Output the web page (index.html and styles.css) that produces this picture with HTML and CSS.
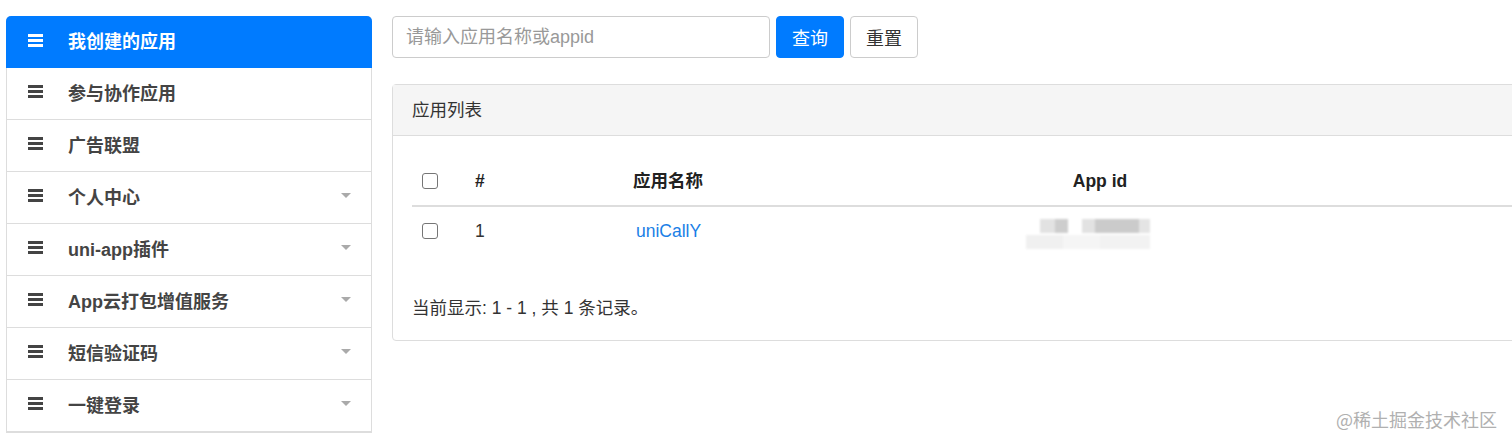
FILE: index.html
```html
<!DOCTYPE html>
<html lang="zh-CN">
<head>
  <meta charset="UTF-8">
  <title>我创建的应用</title>
  <link rel="stylesheet" href="styles.css">
</head>
<body>

<div class="page">
  <!-- Side menu -->
  <ul class="side-menu">
    <li class="menu-item active"><span class="bars"><i></i><i></i><i></i></span><span class="label">我创建的应用</span></li>
    <li class="menu-item"><span class="bars"><i></i><i></i><i></i></span><span class="label">参与协作应用</span></li>
    <li class="menu-item"><span class="bars"><i></i><i></i><i></i></span><span class="label">广告联盟</span></li>
    <li class="menu-item"><span class="bars"><i></i><i></i><i></i></span><span class="label">个人中心</span><span class="caret"></span></li>
    <li class="menu-item"><span class="bars"><i></i><i></i><i></i></span><span class="label">uni-app插件</span><span class="caret"></span></li>
    <li class="menu-item"><span class="bars"><i></i><i></i><i></i></span><span class="label">App云打包增值服务</span><span class="caret"></span></li>
    <li class="menu-item"><span class="bars"><i></i><i></i><i></i></span><span class="label">短信验证码</span><span class="caret"></span></li>
    <li class="menu-item"><span class="bars"><i></i><i></i><i></i></span><span class="label">一键登录</span><span class="caret"></span></li>
  </ul>

  <div class="main">
    <!-- Search -->
    <form class="search-bar">
      <input type="text" class="search-input" placeholder="请输入应用名称或appid">
      <button type="button" class="btn btn-primary">查询</button>
      <button type="reset" class="btn btn-default">重置</button>
    </form>

    <!-- App list -->
    <div class="card">
      <div class="card-header">应用列表</div>
      <div class="card-body">
        <table class="app-table">
          <thead>
            <tr>
              <th class="col-check"><span class="checkbox"></span></th>
              <th class="col-num">#</th>
              <th class="col-name">应用名称</th>
              <th class="col-id">App id</th>
              <th></th>
            </tr>
          </thead>
          <tbody>
            <tr>
              <td class="col-check"><span class="checkbox"></span></td>
              <td class="col-num">1</td>
              <td class="col-name"><a href="#" class="app-link">uniCallY</a></td>
              <td class="col-id">
                <div class="blurred">
                  <span class="blur-line top"></span>
                  <span class="blur-line bottom"></span>
                </div>
              </td>
              <td></td>
            </tr>
          </tbody>
        </table>
        <p class="summary">当前显示: 1 - 1 , 共 1 条记录。</p>
      </div>
    </div>
  </div>
</div>

<div class="watermark">@稀土掘金技术社区</div>

</body>
</html>
```

FILE: styles.css
```css
/* General Styling */
html, body {
  margin: 0;
  height: 100%;
  overflow: hidden;
}

body {
  font-family: "Liberation Sans", "Noto Sans CJK SC", sans-serif;
  font-size: 17.5px;
  color: #333;
  background: #fff;
}

.page {
  display: flex;
  align-items: flex-start;
  gap: 20px;
  padding: 16px 0 0 6px;
}

/* Side menu */
.side-menu {
  list-style: none;
  margin: 0;
  padding: 0;
  width: 364px;
  flex: none;
  border: 1px solid #ddd;
  border-top: none;
  border-radius: 5px 5px 0 0;
}

.menu-item {
  display: flex;
  align-items: center;
  box-sizing: border-box;
  height: 52px;
  padding: 0 18px 4px 21px;
  border-bottom: 1px solid #ddd;
  color: #444;
  font-weight: bold;
  font-size: 18px;
}

.menu-item.active {
  background: #007bff;
  color: #fff;
  margin: 0 -1px;
  padding-left: 22px;
  padding-right: 19px;
  border-bottom: none;
  border-radius: 5px 5px 0 0;
}

.bars {
  display: flex;
  flex-direction: column;
  justify-content: space-between;
  width: 15px;
  height: 13px;
  margin-right: 25px;
}

.bars i {
  display: block;
  height: 3px;
  background: currentColor;
}

.label {
  flex: 1;
}

.caret {
  width: 0;
  height: 0;
  border-left: 5px solid transparent;
  border-right: 5px solid transparent;
  border-top: 5px solid #aaa;
  margin-right: 2px;
}

/* Main area */
.main {
  width: 1140px;
  flex: none;
}

.search-bar {
  display: flex;
  gap: 6px;
  margin: 0 0 26px;
}

.search-input {
  width: 378px;
  height: 42px;
  box-sizing: border-box;
  padding: 6px 13px;
  border: 1px solid #ccc;
  border-radius: 4px;
  font-family: inherit;
  font-size: 18px;
  color: #333;
}

.search-input::placeholder {
  color: #999;
}

.btn {
  height: 42px;
  padding: 0 15px;
  border-radius: 4px;
  font-family: inherit;
  font-size: 18px;
  cursor: pointer;
}

.btn-primary {
  background: #007bff;
  border: 1px solid #007bff;
  color: #fff;
}

.btn-default {
  background: #fff;
  border: 1px solid #ccc;
  color: #333;
}

/* Card */
.card {
  border: 1px solid #ddd;
  border-radius: 4px;
}

.card-header {
  height: 50px;
  line-height: 50px;
  padding: 0 19px;
  background: #f5f5f5;
  border-bottom: 1px solid #ddd;
  color: #333;
}

.card-body {
  padding: 21px 19px 20px;
}

.app-table {
  width: 100%;
  border-collapse: collapse;
}

.app-table th,
.app-table td {
  padding: 12px 10px;
  line-height: 24px;
  text-align: left;
  vertical-align: middle;
}

.app-table th {
  font-weight: bold;
  color: #222;
  border-bottom: 2px solid #ddd;
}

.col-check { width: 33px; }
.col-num { width: 138px; }
.col-name { width: 357px; }
.col-id { width: 180px; }

.app-table th.col-id {
  text-align: center;
}

.checkbox {
  display: block;
  width: 14px;
  height: 14px;
  border: 1px solid #767676;
  border-radius: 3px;
  background: #fff;
}

.app-link {
  color: #1a80e6;
  text-decoration: none;
  padding-left: 3px;
}

/* Masked app id */
.blurred {
  display: flex;
  flex-direction: column;
  align-items: flex-start;
  gap: 2px;
  height: 24px;
  filter: blur(1.2px);
}

.blur-line {
  display: block;
  flex: none;
  height: 14px;
}

.blur-line.top {
  width: 110px;
  margin-left: 30px;
  background: linear-gradient(90deg, #e2e2e2 0 14%, #cdcdcd 14% 25%, #fff 25% 38%, #e2e2e2 38% 50%, #cbcbcb 50% 90%, #e4e4e4 90%);
}

.blur-line.bottom {
  width: 124px;
  margin-left: 16px;
  background: linear-gradient(90deg, #f0f0f0 0 30%, #f5f5f5 30% 60%, #f2f2f2 60%);
}

.summary {
  margin: 41px 0 0;
  line-height: 24px;
  color: #333;
}

/* Watermark */
.watermark {
  position: absolute;
  right: 15px;
  bottom: 14px;
  font-family: "Noto Sans CJK SC", sans-serif;
  font-size: 18px;
  color: #b0b0b0;
}
```
